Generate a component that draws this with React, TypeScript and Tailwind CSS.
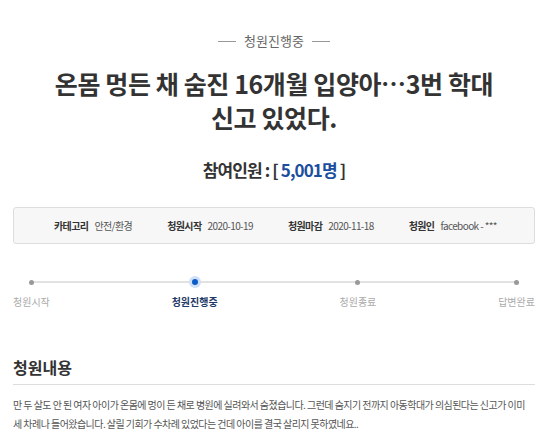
import React from "react";

const font = { fontFamily: '"Noto Sans CJK KR", "Noto Sans", sans-serif' };

function Step({ label, active }: { label: string; active?: boolean }) {
  return (
    <div className="flex flex-col items-center">
      <div className="h-[12px] w-[12px] flex items-center justify-center relative z-10">
        {active ? (
          <div className="h-[12px] w-[12px] rounded-full bg-[#cfe0f7] flex items-center justify-center">
            <div className="h-[6px] w-[6px] rounded-full bg-[#0b5cc9]" />
          </div>
        ) : (
          <div className="h-[5px] w-[5px] rounded-full bg-[#999999]" />
        )}
      </div>
      <div
        className={
          "mt-[7px] text-[10px] leading-[14px] whitespace-nowrap " +
          (active ? "font-bold text-[#1f3a66]" : "text-[#aaaaaa]")
        }
      >
        {label}
      </div>
    </div>
  );
}

export default function App() {
  return (
    <div className="w-[550px] h-[442px] bg-white overflow-hidden" style={font}>
      <div className="pl-[13px] pr-[15px] pt-[32px]">
        <div className="flex items-center justify-center gap-[8px] text-[13px] leading-[18px] text-[#666666]">
          <span className="block w-[18px] h-px bg-[#999999]" />
          <span>청원진행중</span>
          <span className="block w-[18px] h-px bg-[#999999]" />
        </div>
        <h1 className="mt-[16px] text-center text-[25px] leading-[34px] font-bold text-[#333333] tracking-[-0.4px]">
          온몸 멍든 채 숨진 16개월 입양아…3번 학대
          <br />
          신고 있었다.
        </h1>
        <div className="mt-[24px] text-center text-[17px] leading-[24px] font-bold text-[#333333] tracking-[-0.9px]">
          참여인원 : [ <span className="text-[#1d4e9e]">5,001명</span> ]
        </div>
        <div className="mt-[25px] h-[37px] border border-[#dddddd] rounded-[3px] bg-[#f7f7f7] flex items-center text-[10px] leading-[14px] text-[#555555] tracking-[-0.6px]">
          <div className="ml-[40px] flex items-center gap-[6px]">
            <span className="font-bold text-[#333333]">카테고리</span>
            <span>안전/환경</span>
          </div>
          <div className="ml-[35px] flex items-center gap-[6px]">
            <span className="font-bold text-[#333333]">청원시작</span>
            <span>2020-10-19</span>
          </div>
          <div className="ml-[35px] flex items-center gap-[6px]">
            <span className="font-bold text-[#333333]">청원마감</span>
            <span>2020-11-18</span>
          </div>
          <div className="ml-[35px] flex items-center gap-[6px]">
            <span className="font-bold text-[#333333]">청원인</span>
            <span>facebook - ***</span>
          </div>
        </div>
        <div className="relative mt-[32px] flex justify-between">
          <div className="absolute left-[18px] right-[17px] top-[5px] h-[2px] bg-[#e2e2e2]" />
          <Step label="청원시작" />
          <Step label="청원진행중" active />
          <Step label="청원종료" />
          <Step label="답변완료" />
        </div>
        <div className="mt-[47px] pb-[6px] border-b border-[#dddddd] text-[16px] leading-[22px] font-bold text-[#333333]">
          청원내용
        </div>
        <p className="mt-[10px] text-[10px] leading-[19px] text-[#555555] tracking-[-0.55px]">
          만 두 살도 안 된 여자 아이가 온몸에 멍이 든 채로 병원에 실려와서 숨졌습니다. 그런데 숨지기 전까지 아동학대가 의심된다는 신고가 이미 세 차례나 들어왔습니다. 살릴 기회가 수차례 있었다는 건데 아이를 결국 살리지 못하였네요..
        </p>
      </div>
    </div>
  );
}
